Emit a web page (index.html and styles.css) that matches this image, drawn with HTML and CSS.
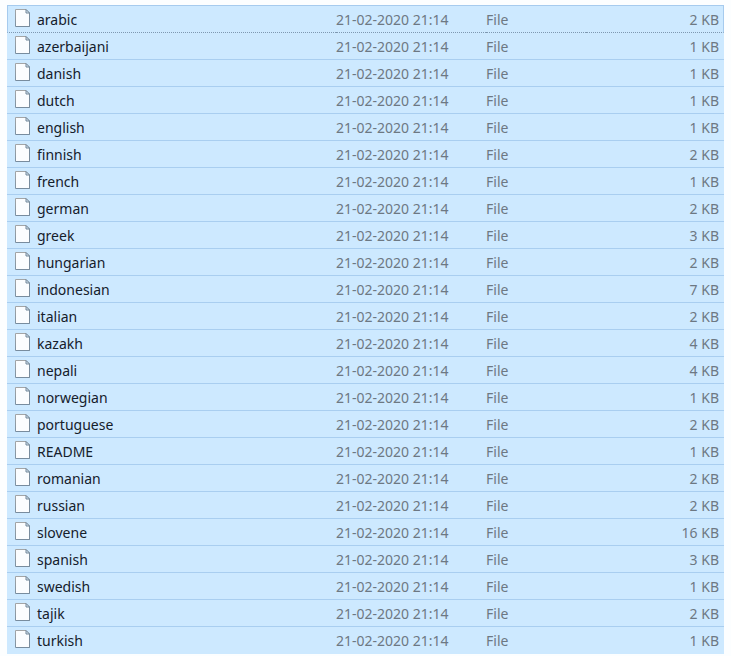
FILE: index.html
```
<!DOCTYPE html>
<html lang="en">
<head>
<meta charset="utf-8">
<title>Files</title>
<link rel="stylesheet" href="styles.css">
</head>
<body>
<svg class="symbols" aria-hidden="true">
  <defs>
    <linearGradient id="edge" x1="0" y1="0" x2="0" y2="1">
      <stop offset="0" stop-color="#a3a5a6"/>
      <stop offset="1" stop-color="#7d91a2"/>
    </linearGradient>
  </defs>
  <symbol id="page" viewBox="0 0 15 18">
    <path d="M.5 .5H11L14.5 4V17.5H.5Z" fill="#fbfdff" stroke="url(#edge)"/>
    <path d="M1 17.5H14.5V4" fill="none" stroke="#788c9e"/>
    <path d="M11 .5V4H14.5Z" fill="#dce8f1" stroke="#71879a"/>
  </symbol>
</svg>
<table class="files">
  <colgroup><col class="name-col"><col class="date-col"><col class="type-col"><col></colgroup>
  <tbody id="rows"></tbody>
</table>
<script src="files.js"></script>
</body>
</html>
```
FILE: styles.css
```
body {
  margin: 5px 7px 0;
  background: #fcfeff;
  font: 14px/20px "Noto Sans", "Open Sans", sans-serif;
}
.symbols {
  position: absolute;
  width: 0;
  height: 0;
}
.files {
  width: 100%;
  table-layout: fixed;
  border-collapse: separate;
  border-spacing: 0;
  border-top: 1px solid #a6cbee;
  background: #cde9ff;
  color: #6d7883;
}
.name-col { width: 329px; }
.date-col { width: 150px; }
.type-col { width: 100px; }
.files td {
  height: 24px;
  padding: 2px 0 0;
  border-bottom: 1px solid #a9cef0;
  vertical-align: middle;
  white-space: nowrap;
}
.files .name {
  color: #15202b;
}
.label {
  display: flex;
  align-items: flex-start;
  gap: 7px;
  padding-left: 8px;
}
.icon {
  width: 15px;
  height: 18px;
  margin: -1px 0 3px;
}
.files .size {
  padding-right: 5px;
  text-align: right;
}
.files .focused td {
  border-bottom: 1px dotted #7e98b1;
}
.files .focused .name {
  border-left: 1px solid #a6cbee;
}
.files .focused .label {
  padding-left: 7px;
}
.files .focused .size {
  padding-right: 4px;
  border-right: 1px solid #a6cbee;
}
.files tr:last-child td {
  border-bottom-color: #cde9ff;
}
```
FILE: files.js
```
const files = [
  ["arabic", 2], ["azerbaijani", 1], ["danish", 1], ["dutch", 1],
  ["english", 1], ["finnish", 2], ["french", 1], ["german", 2],
  ["greek", 3], ["hungarian", 2], ["indonesian", 7], ["italian", 2],
  ["kazakh", 4], ["nepali", 4], ["norwegian", 1], ["portuguese", 2],
  ["README", 1], ["romanian", 2], ["russian", 2], ["slovene", 16],
  ["spanish", 3], ["swedish", 1], ["tajik", 2], ["turkish", 1]
];

document.getElementById("rows").innerHTML = files.map(([name, size], i) => `
  <tr${i === 0 ? ' class="focused"' : ""}>
    <td class="name"><div class="label"><svg class="icon" aria-hidden="true"><use href="#page"/></svg><span>${name}</span></div></td>
    <td>21-02-2020 21:14</td>
    <td>File</td>
    <td class="size">${size} KB</td>
  </tr>`).join("");
```
